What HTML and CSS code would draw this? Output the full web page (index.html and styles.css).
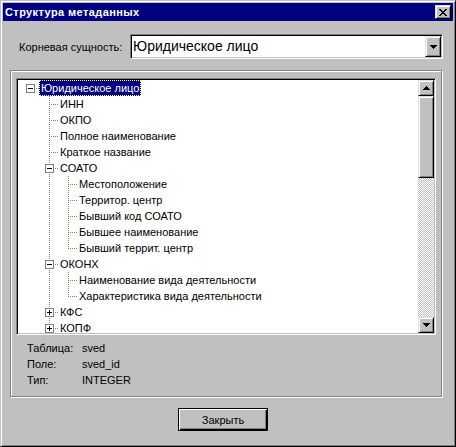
FILE: index.html
```html
<!DOCTYPE html>
<html>
<head>
<meta charset="utf-8">
<title>Структура метаданных</title>
<link rel="stylesheet" href="styles.css">
</head>
<body>
<div class="window">
  <div class="titlebar">
    <span class="title">Структура метаданных</span>
    <div class="tb-close raised">
      <svg width="8" height="7" viewBox="0 0 8 7" shape-rendering="crispEdges" fill="#000">
        <rect x="0" y="0" width="2" height="1"/><rect x="6" y="0" width="2" height="1"/>
        <rect x="1" y="1" width="2" height="1"/><rect x="5" y="1" width="2" height="1"/>
        <rect x="2" y="2" width="4" height="1"/>
        <rect x="3" y="3" width="2" height="1"/>
        <rect x="2" y="4" width="4" height="1"/>
        <rect x="1" y="5" width="2" height="1"/><rect x="5" y="5" width="2" height="1"/>
        <rect x="0" y="6" width="2" height="1"/><rect x="6" y="6" width="2" height="1"/>
      </svg>
    </div>
  </div>

  <div class="root-row">
    <span class="root-label">Корневая сущность:</span>
    <div class="combo sunken">
      <span class="combo-text">Юридическое лицо</span>
      <div class="combo-btn raised">
        <svg width="7" height="4" viewBox="0 0 7 4" shape-rendering="crispEdges" fill="#000">
          <rect x="0" y="0" width="7" height="1"/><rect x="1" y="1" width="5" height="1"/>
          <rect x="2" y="2" width="3" height="1"/><rect x="3" y="3" width="1" height="1"/>
        </svg>
      </div>
    </div>
  </div>

  <div class="group">
    <div class="tree sunken">
      <div class="tree-list">
        <div class="row"><span class="cell h"><i class="box minus"></i></span><span class="lbl sel">Юридическое лицо</span></div>
        <div class="row"><span class="cell"></span><span class="cell c"></span><span class="lbl">ИНН</span></div>
        <div class="row"><span class="cell"></span><span class="cell c"></span><span class="lbl">ОКПО</span></div>
        <div class="row"><span class="cell"></span><span class="cell c"></span><span class="lbl">Полное наименование</span></div>
        <div class="row"><span class="cell"></span><span class="cell c"></span><span class="lbl">Краткое название</span></div>
        <div class="row"><span class="cell"></span><span class="cell c"><i class="box minus"></i></span><span class="lbl">СОАТО</span></div>
        <div class="row"><span class="cell"></span><span class="cell v"></span><span class="cell c"></span><span class="lbl">Местоположение</span></div>
        <div class="row"><span class="cell"></span><span class="cell v"></span><span class="cell c"></span><span class="lbl">Территор. центр</span></div>
        <div class="row"><span class="cell"></span><span class="cell v"></span><span class="cell c"></span><span class="lbl">Бывший код СОАТО</span></div>
        <div class="row"><span class="cell"></span><span class="cell v"></span><span class="cell c"></span><span class="lbl">Бывшее наименование</span></div>
        <div class="row"><span class="cell"></span><span class="cell v"></span><span class="cell c last"></span><span class="lbl">Бывший террит. центр</span></div>
        <div class="row"><span class="cell"></span><span class="cell c"><i class="box minus"></i></span><span class="lbl">ОКОНХ</span></div>
        <div class="row"><span class="cell"></span><span class="cell v"></span><span class="cell c"></span><span class="lbl">Наименование вида деятельности</span></div>
        <div class="row"><span class="cell"></span><span class="cell v"></span><span class="cell c last"></span><span class="lbl">Характеристика вида деятельности</span></div>
        <div class="row"><span class="cell"></span><span class="cell c"><i class="box plus"></i></span><span class="lbl">КФС</span></div>
        <div class="row"><span class="cell"></span><span class="cell c"><i class="box plus"></i></span><span class="lbl">КОПФ</span></div>
      </div>
      <div class="scrollbar">
        <div class="sb-btn raised">
          <svg width="7" height="4" viewBox="0 0 7 4" shape-rendering="crispEdges" fill="#000">
            <rect x="3" y="0" width="1" height="1"/><rect x="2" y="1" width="3" height="1"/>
            <rect x="1" y="2" width="5" height="1"/><rect x="0" y="3" width="7" height="1"/>
          </svg>
        </div>
        <div class="sb-track">
          <div class="sb-thumb raised"></div>
        </div>
        <div class="sb-btn raised">
          <svg width="7" height="4" viewBox="0 0 7 4" shape-rendering="crispEdges" fill="#000">
            <rect x="0" y="0" width="7" height="1"/><rect x="1" y="1" width="5" height="1"/>
            <rect x="2" y="2" width="3" height="1"/><rect x="3" y="3" width="1" height="1"/>
          </svg>
        </div>
      </div>
    </div>
    <div class="info">
      <span>Таблица:</span><span>sved</span>
      <span>Поле:</span><span>sved_id</span>
      <span>Тип:</span><span>INTEGER</span>
    </div>
  </div>

  <div class="btn-close">Закрыть</div>
</div>
</body>
</html>
```

FILE: styles.css
```css
html, body {
  margin: 0;
  padding: 0;
  background: #c0c0c0;
}

body {
  font-family: "Liberation Sans", Arial, sans-serif;
  font-size: 11px;
  color: #000;
}

.window {
  box-sizing: border-box;
  width: 456px;
  height: 447px;
  background: #c0c0c0;
  border: 1px solid;
  border-color: #c0c0c0 #000 #000 #c0c0c0;
  box-shadow: inset 1px 1px #fff, inset -1px -1px #808080;
  padding: 2px;
}

.raised {
  box-sizing: border-box;
  background: #c0c0c0;
  border: 1px solid;
  border-color: #dfdfdf #000 #000 #dfdfdf;
  box-shadow: inset 1px 1px #fff, inset -1px -1px #808080;
}

.sunken {
  box-sizing: border-box;
  border: 1px solid;
  border-color: #808080 #fff #fff #808080;
  box-shadow: inset 1px 1px #000, inset -1px -1px #c0c0c0;
  padding: 1px;
}

/* title bar */
.titlebar {
  height: 18px;
  background: #000080;
  display: flex;
  align-items: center;
  justify-content: space-between;
}

.title {
  color: #fff;
  font-weight: bold;
  font-size: 11px;
  letter-spacing: 0.4px;
  padding-left: 2px;
  white-space: nowrap;
}

.tb-close {
  width: 16px;
  height: 14px;
  margin-right: 2px;
  display: flex;
  align-items: center;
  justify-content: center;
}

.tb-close svg {
  display: block;
  margin-left: -1px;
}

/* root entity row */
.root-row {
  display: flex;
  align-items: center;
  margin-top: 13px;
  padding-left: 16px;
}

.root-label {
  flex: 0 0 111px;
  white-space: nowrap;
}

.combo {
  width: 313px;
  height: 25px;
  background: #fff;
  display: flex;
  align-items: stretch;
}

.combo-text {
  flex: 1;
  font-size: 14px;
  line-height: 21px;
  padding-left: 1px;
  white-space: nowrap;
}

.combo-btn {
  width: 16px;
  display: flex;
  align-items: center;
  justify-content: center;
}

.combo-btn svg,
.sb-btn svg {
  display: block;
}

/* group box */
.group {
  box-sizing: border-box;
  width: 432px;
  height: 327px;
  margin-top: 11px;
  margin-left: 7px;
  border: 1px solid #808080;
  box-shadow: inset 1px 1px #fff, 1px 1px #fff;
  padding: 7px 5px 8px 5px;
}

.tree {
  width: 420px;
  height: 257px;
  display: flex;
  background: #fff;
}

.tree-list {
  flex: 1;
  overflow: hidden;
  padding-left: 3px;
}

.row {
  display: flex;
  height: 16px;
  align-items: center;
}

.cell {
  position: relative;
  flex: none;
  width: 19px;
  height: 16px;
}

.cell.v::before,
.cell.c::before {
  content: "";
  position: absolute;
  left: 9px;
  top: 0;
  width: 1px;
  height: 16px;
  background: repeating-linear-gradient(to bottom, #808080 0 1px, transparent 1px 2px);
}

.cell.c.last::before {
  height: 9px;
}

.cell.c::after,
.cell.h::after {
  content: "";
  position: absolute;
  left: 10px;
  top: 8px;
  width: 9px;
  height: 1px;
  background: repeating-linear-gradient(to right, transparent 0 1px, #808080 1px 2px);
}

.box {
  position: absolute;
  z-index: 1;
  left: 5px;
  top: 4px;
  width: 9px;
  height: 9px;
  box-sizing: border-box;
  border: 1px solid #808080;
  background: #fff;
}

.box::before {
  content: "";
  position: absolute;
  left: 1px;
  top: 3px;
  width: 5px;
  height: 1px;
  background: #000;
}

.box.plus::after {
  content: "";
  position: absolute;
  left: 3px;
  top: 1px;
  width: 1px;
  height: 5px;
  background: #000;
}

.lbl {
  line-height: 16px;
  padding: 0 2px;
  margin-left: -1px;
  white-space: nowrap;
}

.lbl.sel {
  background: #000080;
  color: #fff;
  outline: 1px dotted #ffff80;
  outline-offset: -1px;
}

/* scrollbar */
.scrollbar {
  width: 16px;
  flex: none;
  display: flex;
  flex-direction: column;
}

.sb-btn {
  height: 16px;
  flex: none;
  display: flex;
  align-items: center;
  justify-content: center;
}

.sb-track {
  flex: 1;
  background: repeating-conic-gradient(#c0c0c0 0 25%, #fff 0 50%) 0 0 / 2px 2px;
}

.sb-thumb {
  height: 82px;
}

/* info */
.info {
  display: grid;
  grid-template-columns: 55px auto;
  grid-auto-rows: 16px;
  align-items: center;
  margin-top: 5px;
  padding-left: 11px;
}

/* close button */
.btn-close {
  box-sizing: border-box;
  width: 90px;
  height: 23px;
  margin-top: 11px;
  margin-left: 175px;
  border: 1px solid #000;
  background: #c0c0c0;
  box-shadow: inset 1px 1px #fff, inset -1px -1px #000, inset -2px -2px #808080;
  display: flex;
  align-items: center;
  justify-content: center;
  font-size: 11px;
}
```
